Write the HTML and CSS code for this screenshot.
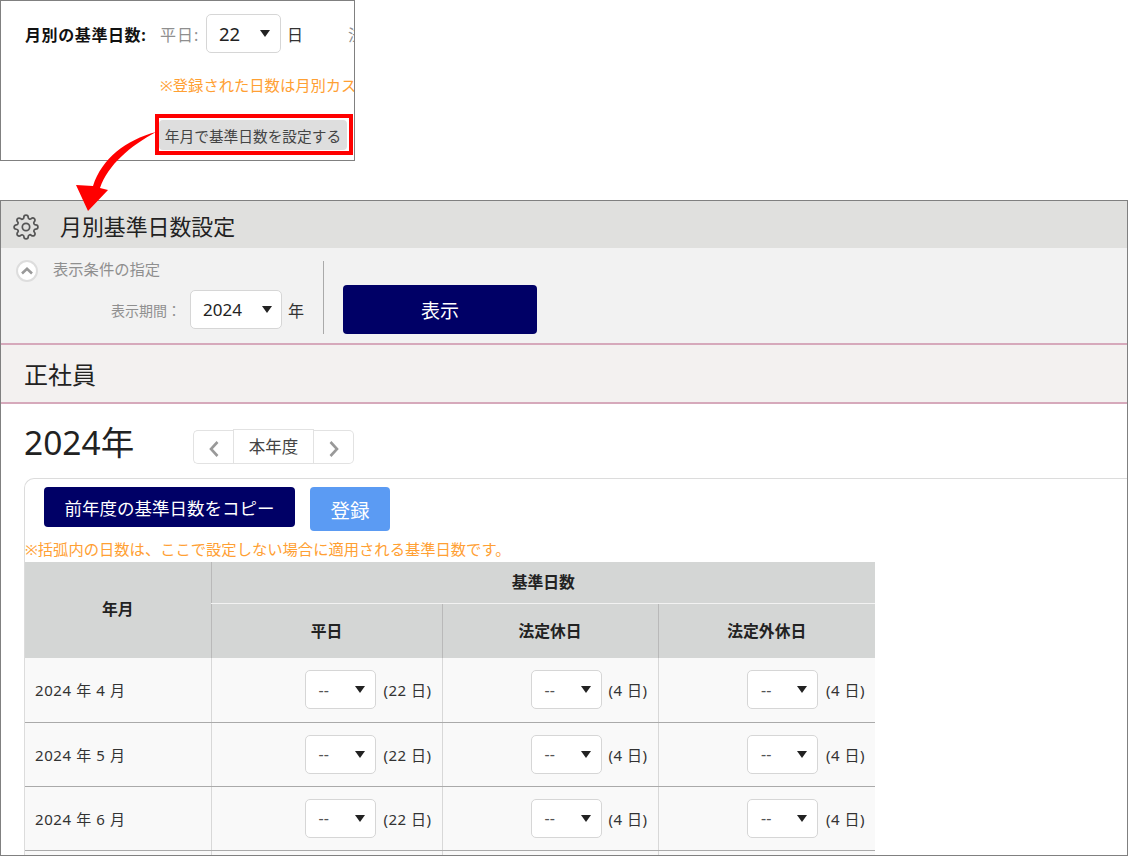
FILE: index.html
```html
<!DOCTYPE html>
<html lang="ja">
<head>
<meta charset="utf-8">
<title>月別基準日数設定</title>
<link rel="stylesheet" href="styles.css">
</head>
<body>
<div class="page">
  <section class="snippet">
    <div class="snip-row">
      <strong class="snip-label">月別の基準日数:</strong>
      <span class="muted snip-weekday">平日:</span>
      <div class="select select-snip"><span>22</span><i class="caret"></i></div>
      <span class="snip-unit">日</span>
      <span class="muted snip-cut">法定休日:</span>
    </div>
    <p class="snip-note">※登録された日数は月別カスタム設定に優先されます</p>
    <div class="snip-action">
      <div class="highlight"><button class="btn-gray">年月で基準日数を設定する</button></div>
    </div>
  </section>

  <section class="panel">
    <header class="panel-head">
      <svg class="gear" viewBox="0 0 24 24" fill="none" stroke="#555" stroke-width="1.6"><circle cx="12" cy="12" r="3.4"/><path d="M19.4 15a1.65 1.65 0 0 0 .33 1.82l.06.06a2 2 0 0 1 0 2.83 2 2 0 0 1-2.83 0l-.06-.06a1.65 1.65 0 0 0-1.82-.33 1.65 1.65 0 0 0-1 1.51V21a2 2 0 0 1-2 2 2 2 0 0 1-2-2v-.09A1.65 1.65 0 0 0 9 19.4a1.65 1.65 0 0 0-1.82.33l-.06.06a2 2 0 0 1-2.83 0 2 2 0 0 1 0-2.83l.06-.06a1.65 1.65 0 0 0 .33-1.82 1.65 1.65 0 0 0-1.51-1H3a2 2 0 0 1-2-2 2 2 0 0 1 2-2h.09A1.65 1.65 0 0 0 4.6 9a1.65 1.65 0 0 0-.33-1.82l-.06-.06a2 2 0 0 1 0-2.83 2 2 0 0 1 2.83 0l.06.06a1.65 1.65 0 0 0 1.82.33H9a1.65 1.65 0 0 0 1-1.51V3a2 2 0 0 1 2-2 2 2 0 0 1 2 2v.09a1.65 1.65 0 0 0 1 1.51 1.65 1.65 0 0 0 1.82-.33l.06-.06a2 2 0 0 1 2.83 0 2 2 0 0 1 0 2.83l-.06.06a1.65 1.65 0 0 0-.33 1.82V9a1.65 1.65 0 0 0 1.51 1H21a2 2 0 0 1 2 2 2 2 0 0 1-2 2h-.09a1.65 1.65 0 0 0-1.51 1z"/></svg>
      <h1 class="panel-title">月別基準日数設定</h1>
    </header>

    <div class="conditions">
      <div class="cond-left">
        <div class="cond-head">
          <span class="toggle"><svg viewBox="0 0 14 14" fill="none" stroke="#999" stroke-width="2.6"><path d="M2 9.500 7 4.800 12 9.500"/></svg></span>
          <span class="cond-title">表示条件の指定</span>
        </div>
        <div class="cond-period">
          <span class="period-label">表示期間：</span>
          <div class="select select-year"><span>2024</span><i class="caret"></i></div>
          <span class="period-unit">年</span>
        </div>
      </div>
      <div class="cond-right"><button class="btn-navy btn-show">表示</button></div>
    </div>

    <div class="employee">正社員</div>

    <div class="year-row">
      <h2 class="year-title">2024年</h2>
      <nav class="year-nav">
        <button class="nav-btn nav-prev"><svg viewBox="0 0 12 20" fill="none" stroke="#999" stroke-width="2.6"><path d="M9.5 3 3 10l6.500 7"/></svg></button>
        <button class="nav-btn nav-mid">本年度</button>
        <button class="nav-btn nav-next"><svg viewBox="0 0 12 20" fill="none" stroke="#999" stroke-width="2.6"><path d="M2.500 3 9 10l-6.500 7"/></svg></button>
      </nav>
    </div>

    <div class="card">
      <div class="card-actions">
        <button class="btn-navy btn-copy">前年度の基準日数をコピー</button>
        <button class="btn-register">登録</button>
      </div>
      <p class="table-note">※括弧内の日数は、ここで設定しない場合に適用される基準日数です。</p>
      <table class="days">
        <colgroup><col class="c-month"><col class="c-week"><col class="c-hol"><col class="c-out"></colgroup>
        <thead>
          <tr class="head-1"><th rowspan="2" class="th-month">年月</th><th colspan="3" class="th-group">基準日数</th></tr>
          <tr class="head-2"><th>平日</th><th>法定休日</th><th>法定外休日</th></tr>
        </thead>
        <tbody>
          <tr>
            <td class="month">2024 年 4 月</td>
            <td><div class="cell"><div class="select select-day"><span>--</span><i class="caret"></i></div><span class="def">(22 日)</span></div></td>
            <td><div class="cell"><div class="select select-day"><span>--</span><i class="caret"></i></div><span class="def">(4 日)</span></div></td>
            <td><div class="cell"><div class="select select-day"><span>--</span><i class="caret"></i></div><span class="def">(4 日)</span></div></td>
          </tr>
          <tr>
            <td class="month">2024 年 5 月</td>
            <td><div class="cell"><div class="select select-day"><span>--</span><i class="caret"></i></div><span class="def">(22 日)</span></div></td>
            <td><div class="cell"><div class="select select-day"><span>--</span><i class="caret"></i></div><span class="def">(4 日)</span></div></td>
            <td><div class="cell"><div class="select select-day"><span>--</span><i class="caret"></i></div><span class="def">(4 日)</span></div></td>
          </tr>
          <tr>
            <td class="month">2024 年 6 月</td>
            <td><div class="cell"><div class="select select-day"><span>--</span><i class="caret"></i></div><span class="def">(22 日)</span></div></td>
            <td><div class="cell"><div class="select select-day"><span>--</span><i class="caret"></i></div><span class="def">(4 日)</span></div></td>
            <td><div class="cell"><div class="select select-day"><span>--</span><i class="caret"></i></div><span class="def">(4 日)</span></div></td>
          </tr>
          <tr>
            <td class="month"></td><td></td><td></td><td></td>
          </tr>
        </tbody>
      </table>
    </div>
  </section>

  <svg class="arrow" viewBox="0 0 1128 856"><path fill="#ff0000" d="M156 132C126 140 102 158 93 186L76 185 88 211 108 190 100 188C108 165 130 146 156 132Z"/></svg>
</div>
</body>
</html>
```
FILE: styles.css
```css
* { box-sizing: border-box; }
html, body { margin: 0; padding: 0; background: #fff; }
body { font-family: "Noto Sans", "Noto Sans CJK JP", sans-serif; color: #222; }
button { font-family: inherit; border: 0; padding: 0; margin: 0; }
h1, h2, p { margin: 0; font-weight: normal; }
.page { position: relative; width: 1128px; height: 856px; overflow: hidden; }
.arrow { position: absolute; left: 0; top: 0; width: 1128px; height: 856px; pointer-events: none; }

.select { display: flex; align-items: center; justify-content: space-between; background: #fff; border: 1px solid #d6d6d6; border-radius: 5px; color: #222; flex: none; }
.caret { width: 0; height: 0; border-left: 5px solid transparent; border-right: 5px solid transparent; border-top: 7px solid #222; flex: none; }
.muted { color: #8f8f8f; }

.snippet { width: 355px; height: 161px; border: 1px solid #808080; overflow: hidden; margin-bottom: 39px; padding: 13px 0 0 24px; }
.snip-row { display: flex; align-items: center; height: 39px; font-size: 16px; white-space: nowrap; }
.snip-label { font-weight: 700; color: #111; width: 135px; font-size: 16px; letter-spacing: 0.600px; flex: none; }
.snip-weekday { width: 46px; letter-spacing: 1px; flex: none; }
.select-snip { width: 75px; height: 39px; padding: 0 10px 0 12px; font-size: 18.500px; }
.snip-unit { margin-left: 6px; width: 61px; color: #333; font-size: 16px; flex: none; }
.snip-cut { flex: none; }
.snip-note { margin: 21px 0 0 135px; color: #ffa033; font-size: 15.300px; line-height: 22px; white-space: nowrap; }
.snip-action { margin: 18px 0 0 130px; width: 198px; }
.highlight { border: 4px solid #f00; width: 198px; height: 41px; padding: 2px 2px 0 0; background: #fff; display: flex; justify-content: flex-end; }
.btn-gray { width: 188px; height: 30px; padding-top: 2px; background: #dedede; border-radius: 4px; color: #444; font-size: 14.700px; line-height: 28px; white-space: nowrap; }

.panel { height: 656px; border: 1px solid #808080; overflow: hidden; background: #fff; }
.panel-head { height: 47px; background: #e0e0de; display: flex; align-items: center; padding-left: 12px; }
.gear { width: 26px; height: 26px; flex: none; margin-top: 5px; }
.panel-title { font-size: 21.900px; margin: 5px 0 0 21px; color: #222; line-height: 30px; }

.conditions { height: 97px; background: #f2f2f2; display: flex; border-bottom: 2px solid #d6a9bb; }
.cond-left { width: 323px; height: 73px; margin-top: 13px; border-right: 1px solid #aaa; position: relative; flex: none; }
.cond-head { display: flex; align-items: center; height: 20px; padding-left: 15px; }
.toggle { width: 22px; height: 22px; border-radius: 50%; border: 2px solid #ddd; background: #fff; display: flex; align-items: center; justify-content: center; flex: none; }
.toggle svg { width: 14px; height: 14px; }
.cond-title { margin-left: 15px; font-size: 15.300px; color: #8f8f8f; line-height: 20px; margin-top: -4px; }
.cond-period { display: flex; align-items: center; justify-content: flex-end; margin-top: 9px; padding-right: 19px; }
.period-label { color: #8f8f8f; font-size: 14px; width: 79px; white-space: nowrap; }
.select-year { width: 92px; height: 39px; padding: 0 9px 0 12px; font-size: 17px; }
.period-unit { margin-left: 6px; font-size: 16px; color: #333; }
.cond-right { padding: 37px 0 0 19px; }
.btn-navy { background: #000066; color: #fff; border-radius: 4px; }
.btn-show { width: 194px; height: 49px; font-size: 19px; }

.employee { height: 59px; background: #f3f1f0; border-bottom: 2px solid #d6a9bb; font-size: 24px; line-height: 59px; padding-left: 23px; color: #222; }

.year-row { display: flex; height: 74px; padding-left: 23px; }
.year-title { font-size: 33.500px; line-height: 40px; width: 169px; margin-top: 18px; color: #222; white-space: nowrap; }
.year-nav { display: flex; margin-top: 26px; height: 34px; }
.nav-btn { background: #fff; border: 1px solid #e2e2e2; height: 34px; display: flex; align-items: center; justify-content: center; }
.nav-btn svg { width: 12px; height: 20px; margin-top: 3px; }
.nav-prev { width: 40px; border-radius: 5px 0 0 5px; border-right: 0; }
.nav-mid { width: 81px; height: 35px; margin-top: -1px; padding-bottom: 2px; font-size: 16.500px; color: #444; }
.nav-next { width: 40px; border-radius: 0 5px 5px 0; border-left: 0; }

.card { margin: 0 -30px 0 23px; border: 1px solid #dcdcdc; border-radius: 10px 0 0 0; border-bottom: 0; border-right: 0; }
.card-actions { display: flex; align-items: flex-start; padding: 8px 0 0 19px; height: 60px; gap: 15px; }
.btn-copy { width: 251px; height: 40px; font-size: 17.500px; white-space: nowrap; }
.btn-register { width: 80px; height: 44px; background: #5b9bf3; color: #fff; border-radius: 4px; font-size: 19.500px; }
.table-note { color: #ffa033; font-size: 15.300px; line-height: 22px; white-space: nowrap; height: 24px; margin-top: -1px; }

.days { border-collapse: collapse; table-layout: fixed; width: 850px; font-size: 15px; }
.c-month { width: 186px; }
.c-week { width: 231px; }
.c-hol { width: 216px; }
.c-out { width: 217px; }
.days th { background: #d4d6d5; font-weight: 700; color: #222; font-size: 15.800px; border-left: 1px solid #b9b9b9; padding: 0 0 1px; }
.days .th-month { border-left: 0; padding-bottom: 3px; }
.head-1 { height: 41px; }
.days .th-group { border-bottom: 1px solid #f2f2f2; padding-bottom: 2px; }
.head-2 { height: 55px; }
.days td { background: #f9f9f9; height: 64px; border-left: 1px solid #d8d8d8; border-bottom: 1px solid #aaa; padding: 0 10px; color: #333; }
.days .month { border-left: 0; letter-spacing: 0.600px; font-size: 15px; white-space: nowrap; }
.cell { display: flex; align-items: center; justify-content: flex-end; gap: 6px; }
.select-day { width: 71px; height: 39px; padding: 0 10px 0 13px; font-size: 16px; color: #555; }
.def { font-size: 15px; letter-spacing: 0.500px; color: #333; white-space: nowrap; width: 50px; text-align: right; }
.days td:nth-child(3) .def { width: 40px; }
.days td:nth-child(4) .def { width: 41px; }
```
